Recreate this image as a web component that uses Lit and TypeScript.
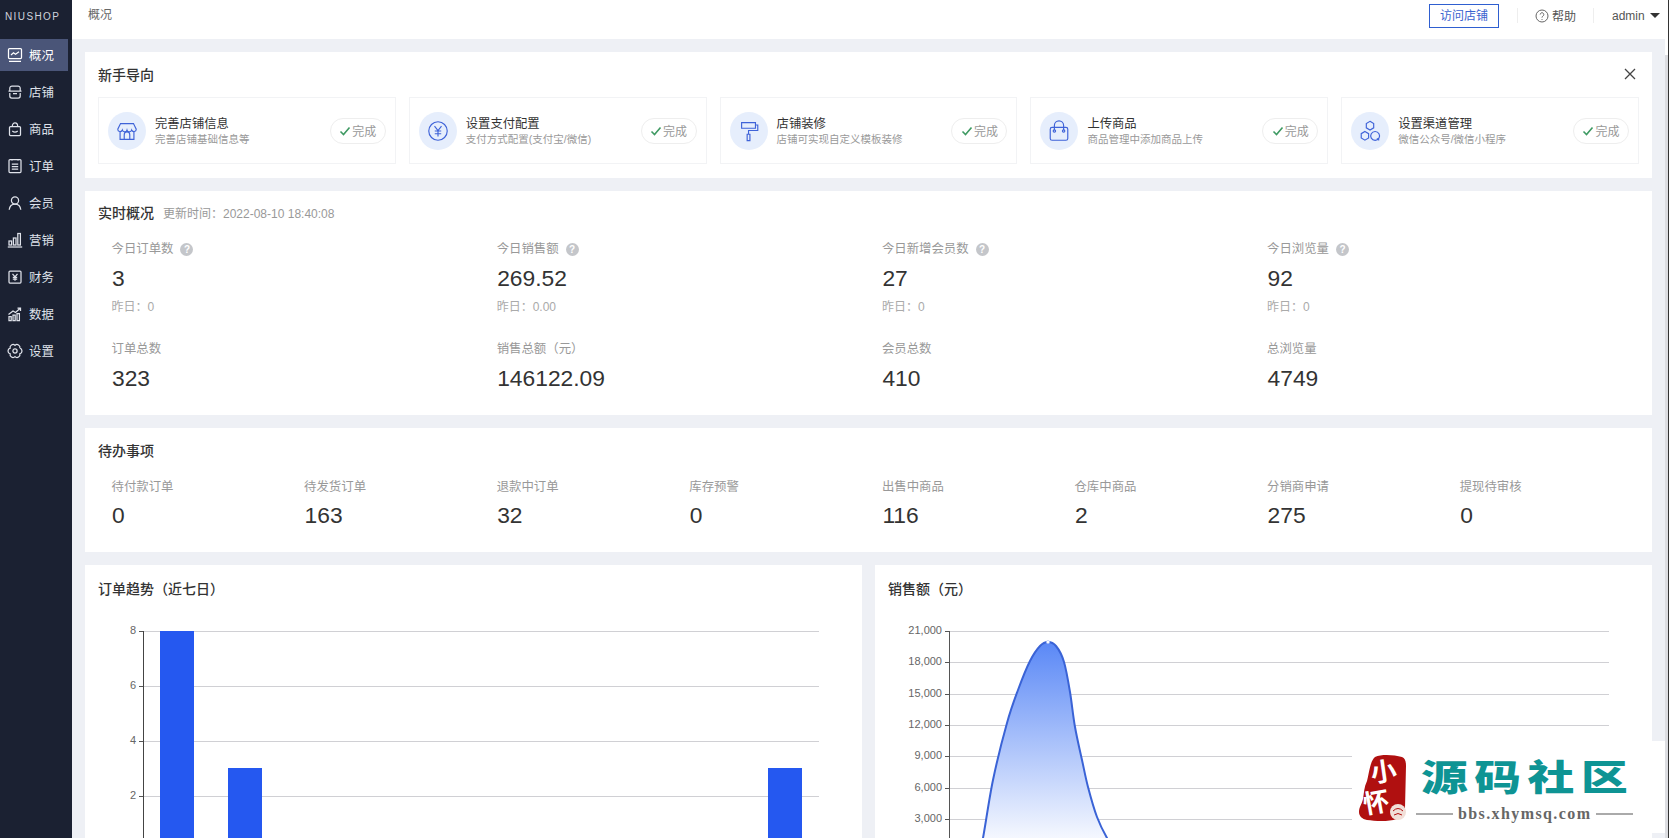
import { LitElement, html, css, svg } from "lit";
import { customElement } from "lit/decorators.js";

function gearPath(): string {
  const pts: string[] = [];
  for (let i = 0; i <= 6; i++) {
    const a = ((i * 60 - 30) * Math.PI) / 180;
    const x = (8 + 5.6 * Math.cos(a)).toFixed(2);
    const y = (8 + 5.6 * Math.sin(a)).toFixed(2);
    pts.push(i === 0 ? `M${x} ${y}` : `A2.9 2.9 0 0 1 ${x} ${y}`);
  }
  return pts.join("");
}

const navIcons = [
  svg`<rect x="1.5" y="1.5" width="13" height="10" rx="1"/><path d="M4 8l2.5-2.2 2 1.4L12 4.8M2 14.3h12"/>`,
  svg`<path d="M2.8 7V4.2A2.2 2.2 0 0 1 5 2h6a2.2 2.2 0 0 1 2.2 2.2V7M1.5 7h13M2.8 9v3a2 2 0 0 0 2 2h6.4a2 2 0 0 0 2-2V9M6 9.5h4"/>`,
  svg`<rect x="2.5" y="5.5" width="11" height="9" rx="1"/><path d="M5.3 5.5a2.7 3.6 0 0 1 5.4 0M5.3 10q2.7 2.2 5.4 0"/>`,
  svg`<rect x="2" y="1.5" width="12" height="13" rx="1"/><path d="M5 1v1.5M11 1v1.5M4.8 6h6.4M4.8 8.5h6.4M4.8 11h6.4"/>`,
  svg`<circle cx="8" cy="5.4" r="3.6"/><path d="M2.2 14.8c.4-3.6 2.7-5.8 5.8-5.8s5.4 2.2 5.8 5.8"/>`,
  svg`<rect x="2" y="9" width="2.6" height="4"/><rect x="6.4" y="6" width="2.6" height="7"/><rect x="10.8" y="1.5" width="2.6" height="11.5"/><path d="M.8 15h14.4"/>`,
  svg`<rect x="2" y="2" width="12" height="12" rx="1"/><path d="M5.5 4.8L8 7.8l2.5-3M8 7.8v4M5.8 8.3h4.4M5.8 10.2h4.4"/>`,
  svg`<path d="M2 14.5v-4h2.2v4zM6 14.5V9h2.2v5.5zM10 14.5V7.5h2.4v7zM1.5 8.5L6 5l2.5 1.5L13 2.5M10.5 2H13.5v3"/>`,
  svg`<path d="${gearPath()}"/><circle cx="8" cy="8" r="2.1"/>`,
];

const navItems = ["概况", "店铺", "商品", "订单", "会员", "营销", "财务", "数据", "设置"];

const guideIcons = [
  svg`<path d="M6 5h14l3 6a2.6 2.6 0 0 1-5 1 2.6 2.6 0 0 1-5 0 2.6 2.6 0 0 1-5 0 2.6 2.6 0 0 1-5-1zM5.5 13v9h15v-9M10 22v-5a3 3 0 0 1 6 0v5"/>`,
  svg`<circle cx="13" cy="13" r="10"/><path d="M9.2 7.8L13 12.6l3.8-4.8M13 12.6v6.4M9.5 13h7M9.5 16h7"/>`,
  svg`<path d="M5 4h15v6H5zM20 6.5h2.5v6H12.5v4M11 16.5h3v7h-3z"/>`,
  svg`<rect x="3.5" y="9" width="19" height="14" rx="2"/><path d="M8 12V7a5 5 0 0 1 10 0v5"/><circle cx="8" cy="13" r="1.3"/><circle cx="18" cy="13" r="1.3"/>`,
  svg`<path d="M13 2.5l4 2.4v4.7L13 12l-4-2.4V4.9zM7.5 13.5l4 2.4v4.6l-4 2.4-4-2.4v-4.6zM18.5 13.5a4.8 4.8 0 1 0 .1 0zM20.5 21l2.5 2"/>`,
];

const guide = [
  ["完善店铺信息", "完善店铺基础信息等"],
  ["设置支付配置", "支付方式配置(支付宝/微信)"],
  ["店铺装修", "店铺可实现自定义模板装修"],
  ["上传商品", "商品管理中添加商品上传"],
  ["设置渠道管理", "微信公众号/微信小程序"],
];

const stats = [
  ["今日订单数", "3", "昨日：0"],
  ["今日销售额", "269.52", "昨日：0.00"],
  ["今日新增会员数", "27", "昨日：0"],
  ["今日浏览量", "92", "昨日：0"],
];
const totals = [
  ["订单总数", "323"],
  ["销售总额（元）", "146122.09"],
  ["会员总数", "410"],
  ["总浏览量", "4749"],
];
const todos = [
  ["待付款订单", "0"],
  ["待发货订单", "163"],
  ["退款中订单", "32"],
  ["库存预警", "0"],
  ["出售中商品", "116"],
  ["仓库中商品", "2"],
  ["分销商申请", "275"],
  ["提现待审核", "0"],
];

function smooth(p: number[][]): string {
  let d = `M${p[0][0]} ${p[0][1]}`;
  for (let i = 0; i < p.length - 1; i++) {
    const p0 = p[Math.max(0, i - 1)];
    const p1 = p[i];
    const p2 = p[i + 1];
    const p3 = p[Math.min(p.length - 1, i + 2)];
    const c1x = p1[0] + (p2[0] - p0[0]) / 6;
    const c1y = p1[1] + (p2[1] - p0[1]) / 6;
    const c2x = p2[0] - (p3[0] - p1[0]) / 6;
    const c2y = p2[1] - (p3[1] - p1[1]) / 6;
    d += `C${c1x.toFixed(1)} ${c1y.toFixed(1)} ${c2x.toFixed(1)} ${c2y.toFixed(1)} ${p2[0]} ${p2[1]}`;
  }
  return d;
}

@customElement("order-chart")
class OrderChart extends LitElement {
  static styles = css`
    :host { display: block; }
    svg { display: block; }
    text { font: 11px "Liberation Sans", sans-serif; fill: #666; }
  `;
  render() {
    const ox = 85, oy = 610;
    const ticks = [[8, 631], [6, 686], [4, 741], [2, 796]];
    const bars = [[160, 631], [228, 768], [768, 768]];
    return html`<svg width="777" height="228">
      <g transform="translate(${-ox} ${-oy})">
        ${ticks.map(([t, y]) => svg`
          <line x1="143" x2="819" y1=${y + 0.5} y2=${y + 0.5} stroke="#d0d0d4"/>
          <line x1="139" x2="143" y1=${y + 0.5} y2=${y + 0.5} stroke="#555"/>
          <text x="136" y=${y + 3} text-anchor="end">${t}</text>`)}
        <line x1="143.5" x2="143.5" y1="631" y2="851" stroke="#444"/>
        ${bars.map(([x, y]) => svg`<rect x=${x} y=${y} width="34" height=${851 - y} fill="#2558f0"/>`)}
      </g>
    </svg>`;
  }
}

@customElement("sales-chart")
class SalesChart extends LitElement {
  static styles = css`
    :host { display: block; }
    svg { display: block; }
    text { font: 11px "Liberation Sans", sans-serif; fill: #666; }
  `;
  render() {
    const ox = 875, oy = 610;
    const ticks: [string, number][] = [
      ["21,000", 631], ["18,000", 662], ["15,000", 694], ["12,000", 725],
      ["9,000", 756], ["6,000", 788], ["3,000", 819],
    ];
    const pts = [
      [979, 851], [983, 838], [993, 780], [1007, 723], [1018, 690], [1030, 661], [1040, 646],
      [1048, 642], [1056, 646], [1064, 662], [1070, 692], [1075, 727], [1082, 760],
      [1088, 787], [1097, 817], [1107, 838], [1116, 851],
    ];
    const line = smooth(pts);
    return html`<svg width="777" height="228">
      <defs>
        <linearGradient id="ar" x1="0" y1="642" x2="0" y2="851" gradientUnits="userSpaceOnUse">
          <stop offset="0" stop-color="#5a88f6"/>
          <stop offset="1" stop-color="#ffffff"/>
        </linearGradient>
      </defs>
      <g transform="translate(${-ox} ${-oy})">
        ${ticks.map(([t, y]) => svg`
          <line x1="949" x2="1609" y1=${y + 0.5} y2=${y + 0.5} stroke="#d0d0d4"/>
          <line x1="945" x2="949" y1=${y + 0.5} y2=${y + 0.5} stroke="#555"/>
          <text x="942" y=${y + 3} text-anchor="end">${t}</text>`)}
        <line x1="949.5" x2="949.5" y1="631" y2="851" stroke="#555"/>
        <path d="${line}Z" fill="url(#ar)"/>
        <path d=${line} fill="none" stroke="#3a63d6" stroke-width="2"/>
        <circle cx="1048" cy="642" r="1.6" fill="#fff" stroke="#a9bff5" stroke-width=".6"/>
      </g>
    </svg>`;
  }
}

@customElement("app-root")
class AppRoot extends LitElement {
  static styles = css`
    :host {
      display: flex;
      position: relative;
      width: 1670px;
      height: 838px;
      overflow: hidden;
      background: #eef0f5;
      font-family: "Liberation Sans", "Noto Sans CJK SC", sans-serif;
      color: #333;
      font-size: 12px;
    }
    .side { width: 72px; flex: none; background: #1b2132; color: #dfe2ea; }
    .logo { height: 33px; line-height: 33px; padding-left: 5px; font-size: 10px; letter-spacing: 1.4px; color: #cfd3dd; white-space: nowrap; }
    .nav { display: flex; flex-direction: column; gap: 5px; padding-top: 6px; }
    .nav-item { height: 32px; width: 68px; display: flex; align-items: center; padding-left: 7px; box-sizing: border-box; gap: 6px; font-size: 12.4px; }
    .nav-item.on { background: #4a5578; color: #fff; }
    .nav-item svg { width: 16px; height: 16px; fill: none; stroke: currentColor; stroke-width: 1.25; flex: none; }
    .main { flex: 1; min-width: 0; display: flex; flex-direction: column; }
    .top { height: 39px; flex: none; background: #fff; display: flex; align-items: flex-start; }
    .crumb { margin-left: 16px; line-height: 30px; color: #666; font-size: 12px; }
    .top-right { margin-left: auto; display: flex; align-items: center; height: 31px; }
    .visit { width: 70px; height: 24px; box-sizing: border-box; border: 1px solid #2f5fd0; color: #3b64cf; text-align: center; line-height: 22px; font-size: 12px; }
    .vr { width: 1px; height: 15px; background: #eee; }
    .vr.a { margin-left: 18px; }
    .help { display: flex; align-items: center; gap: 3px; margin-left: 17px; width: 58px; color: #555; font-size: 12px; }
    .help svg { width: 14px; height: 14px; fill: none; stroke: #666; stroke-width: 1; }
    .admin { margin-left: 18px; color: #555; font-size: 12px; display: flex; align-items: center; gap: 5px; width: 53px; }
    .caret { width: 0; height: 0; border: 5px solid transparent; border-top-color: #333; border-bottom: 0; }
    .content { flex: 1; padding: 13px; display: flex; flex-direction: column; gap: 13px; overflow: hidden; }
    .card { background: #fff; padding: 13px; flex: none; }
    .card.c1 { padding-top: 11px; padding-bottom: 14px; }
    .card.c2 { padding-top: 10px; }
    .card.c3 { padding-top: 11px; }
    .head { display: flex; align-items: center; height: 22px; }
    .h { font-size: 14px; font-weight: 500; color: #333; }
    .close { margin-left: auto; margin-right: 2px; width: 14px; height: 14px; fill: none; stroke: #444; stroke-width: 1.3; }
    .guide { display: flex; gap: 13px; margin-top: 12px; }
    .gi { flex: 1; min-width: 0; height: 67px; box-sizing: border-box; border: 1px solid #f2f3f5; display: flex; align-items: center; padding: 0 9px; }
    .circle { width: 38px; height: 38px; border-radius: 50%; background: #e6eefc; display: flex; align-items: center; justify-content: center; flex: none; }
    .circle svg { width: 24px; height: 24px; fill: none; stroke: #3f63d8; stroke-width: 1.25; }
    .gt { margin-left: 9px; flex: 1; min-width: 0; padding-top: 3px; }
    .gt1 { font-size: 12.3px; line-height: 15px; color: #333; }
    .gt2 { font-size: 10.5px; line-height: 15px; color: #999; white-space: nowrap; }
    .pill { width: 56px; height: 26px; box-sizing: border-box; border: 1px solid #eeeeee; border-radius: 13px; display: flex; align-items: center; justify-content: center; gap: 1px; color: #999; font-size: 12px; flex: none; }
    .pill svg { width: 12px; height: 12px; fill: none; stroke: #3f9a63; stroke-width: 1.6; }
    .sub { margin-left: 9px; font-size: 12px; color: #999; }
    .grid4 { display: grid; grid-template-columns: repeat(4, 385.2px); row-gap: 22px; padding: 16px 0 9px 14px; }
    .grid8 { display: grid; grid-template-columns: repeat(8, 192.6px); padding: 16px 0 9px 14px; }
    .lab { font-size: 12.4px; line-height: 20px; color: #999; display: flex; align-items: center; margin-left: -0.5px; }
    .q { width: 13px; height: 13px; margin-left: 7px; border-radius: 50%; background: #c4c6ca; color: #fff; font-size: 10px; line-height: 13px; text-align: center; font-weight: 700; }
    .val { font-family: "Liberation Sans", sans-serif; font-size: 22.8px; line-height: 30px; color: #333; margin-top: 4px; }
    .grid8 .val { margin-top: 3px; }
    .yes { font-size: 12px; line-height: 20px; color: #aaa; margin: 4px 0 0 -0.5px; }
    .charts { display: grid; grid-template-columns: 777px 777px; gap: 13px; flex: none; }
    .chart { background: #fff; height: 300px; }
    .chart .head { padding: 13px 13px 0; height: 20px; }
    .chart order-chart, .chart sales-chart { margin-top: 12px; }
    .track { width: 5px; flex: none; background: #fff; display: flex; justify-content: flex-start; }
    .thumb { width: 3px; height: 783px; margin-top: 55px; background: #dcdde1; }
    .edge { width: 1px; flex: none; background: #333; position: absolute; right: 1px; top: 0; bottom: 0; }
    .wm { position: absolute; left: 1352px; top: 741px; width: 313px; height: 92px; background: #fff; display: flex; padding: 13px 0 0 6px; box-sizing: border-box; }
    .seal { width: 50px; height: 70px; flex: none; overflow: visible; }
    .seal text { font-family: "Noto Sans CJK SC", sans-serif; font-weight: 700; fill: #fff; }
    .wm-r { margin-left: 8px; }
    .wm-t { font-family: "Noto Sans CJK SC", sans-serif; font-weight: 900; font-size: 36px; line-height: 44px; letter-spacing: 5px; color: #0e9494; white-space: nowrap; margin: -1px 0 0 5px; transform: scaleX(1.3); transform-origin: left center; width: 164px; }
    .wm-s { display: flex; align-items: center; gap: 5px; margin-top: 9px; }
    .wm-s i { width: 37px; height: 1.5px; background: #aaa; }
    .wm-s span { font-family: "Liberation Serif", serif; font-size: 16px; line-height: 16px; font-weight: 700; color: #666; letter-spacing: 1.4px; }
  `;

  render() {
    return html`
      <aside class="side">
        <div class="logo">NIUSHOP</div>
        <nav class="nav">
          ${navItems.map(
            (t, i) => html`<div class="nav-item ${i === 0 ? "on" : ""}">
              <svg viewBox="0 0 16 16">${navIcons[i]}</svg><span>${t}</span>
            </div>`
          )}
        </nav>
      </aside>
      <div class="main">
        <header class="top">
          <div class="crumb">概况</div>
          <div class="top-right">
            <div class="visit">访问店铺</div>
            <div class="vr a"></div>
            <div class="help">
              <svg viewBox="0 0 14 14"><circle cx="7" cy="7" r="6"/><path d="M5.2 5.5a1.8 1.8 0 1 1 2.7 1.6c-.6.4-.9.7-.9 1.5M7 10v.9"/></svg>
              <span>帮助</span>
            </div>
            <div class="vr"></div>
            <div class="admin"><span>admin</span><span class="caret"></span></div>
          </div>
        </header>
        <div class="content">
          <section class="card c1">
            <div class="head">
              <span class="h">新手导向</span>
              <svg class="close" viewBox="0 0 14 14"><path d="M2 2l10 10M12 2L2 12"/></svg>
            </div>
            <div class="guide">
              ${guide.map(
                ([a, b], i) => html`<div class="gi">
                  <div class="circle"><svg viewBox="0 0 26 26">${guideIcons[i]}</svg></div>
                  <div class="gt"><div class="gt1">${a}</div><div class="gt2">${b}</div></div>
                  <div class="pill"><svg viewBox="0 0 12 12"><path d="M1.5 6.5l3 3 6-7"/></svg><span>完成</span></div>
                </div>`
              )}
            </div>
          </section>
          <section class="card c2">
            <div class="head"><span class="h">实时概况</span><span class="sub">更新时间：2022-08-10 18:40:08</span></div>
            <div class="grid4">
              ${stats.map(
                ([l, v, y]) => html`<div>
                  <div class="lab">${l}<span class="q">?</span></div>
                  <div class="val">${v}</div>
                  <div class="yes">${y}</div>
                </div>`
              )}
              ${totals.map(([l, v]) => html`<div><div class="lab">${l}</div><div class="val">${v}</div></div>`)}
            </div>
          </section>
          <section class="card c3">
            <div class="head"><span class="h">待办事项</span></div>
            <div class="grid8">
              ${todos.map(([l, v]) => html`<div><div class="lab">${l}</div><div class="val">${v}</div></div>`)}
            </div>
          </section>
          <div class="charts">
            <section class="chart">
              <div class="head"><span class="h">订单趋势（近七日）</span></div>
              <order-chart></order-chart>
            </section>
            <section class="chart">
              <div class="head"><span class="h">销售额（元）</span></div>
              <sales-chart></sales-chart>
            </section>
          </div>
        </div>
      </div>
      <div class="track"><div class="thumb"></div></div>
      <div class="edge"></div>
      <div class="wm">
        <svg class="seal" viewBox="0 0 50 70">
          <path d="M17 3C24 0 36 1 44 3c3 1 4 4 4 9l-1 42c-1 6-2 9-8 11-9 3-22 2-30 1-5-1-8-4-8-8 0-5 3-8 4-13 1-6 1-12 4-18 2-7 3-20 8-24z" fill="#b01010"/>
          <text x="26" y="27" font-size="26" text-anchor="middle" transform="rotate(-8 26 20)">小</text>
          <text x="18" y="58" font-size="26" text-anchor="middle" transform="rotate(-10 18 48)">怀</text>
          <circle cx="40" cy="58" r="8" fill="#f1dfd8"/>
          <path d="M35 57q5-5 10 0M36 61q4-3 8 0" fill="none" stroke="#b01010" stroke-width="1"/>
        </svg>
        <div class="wm-r">
          <div class="wm-t">源码社区</div>
          <div class="wm-s"><i></i><span>bbs.xhymsq.com</span><i></i></div>
        </div>
      </div>
    `;
  }
}
